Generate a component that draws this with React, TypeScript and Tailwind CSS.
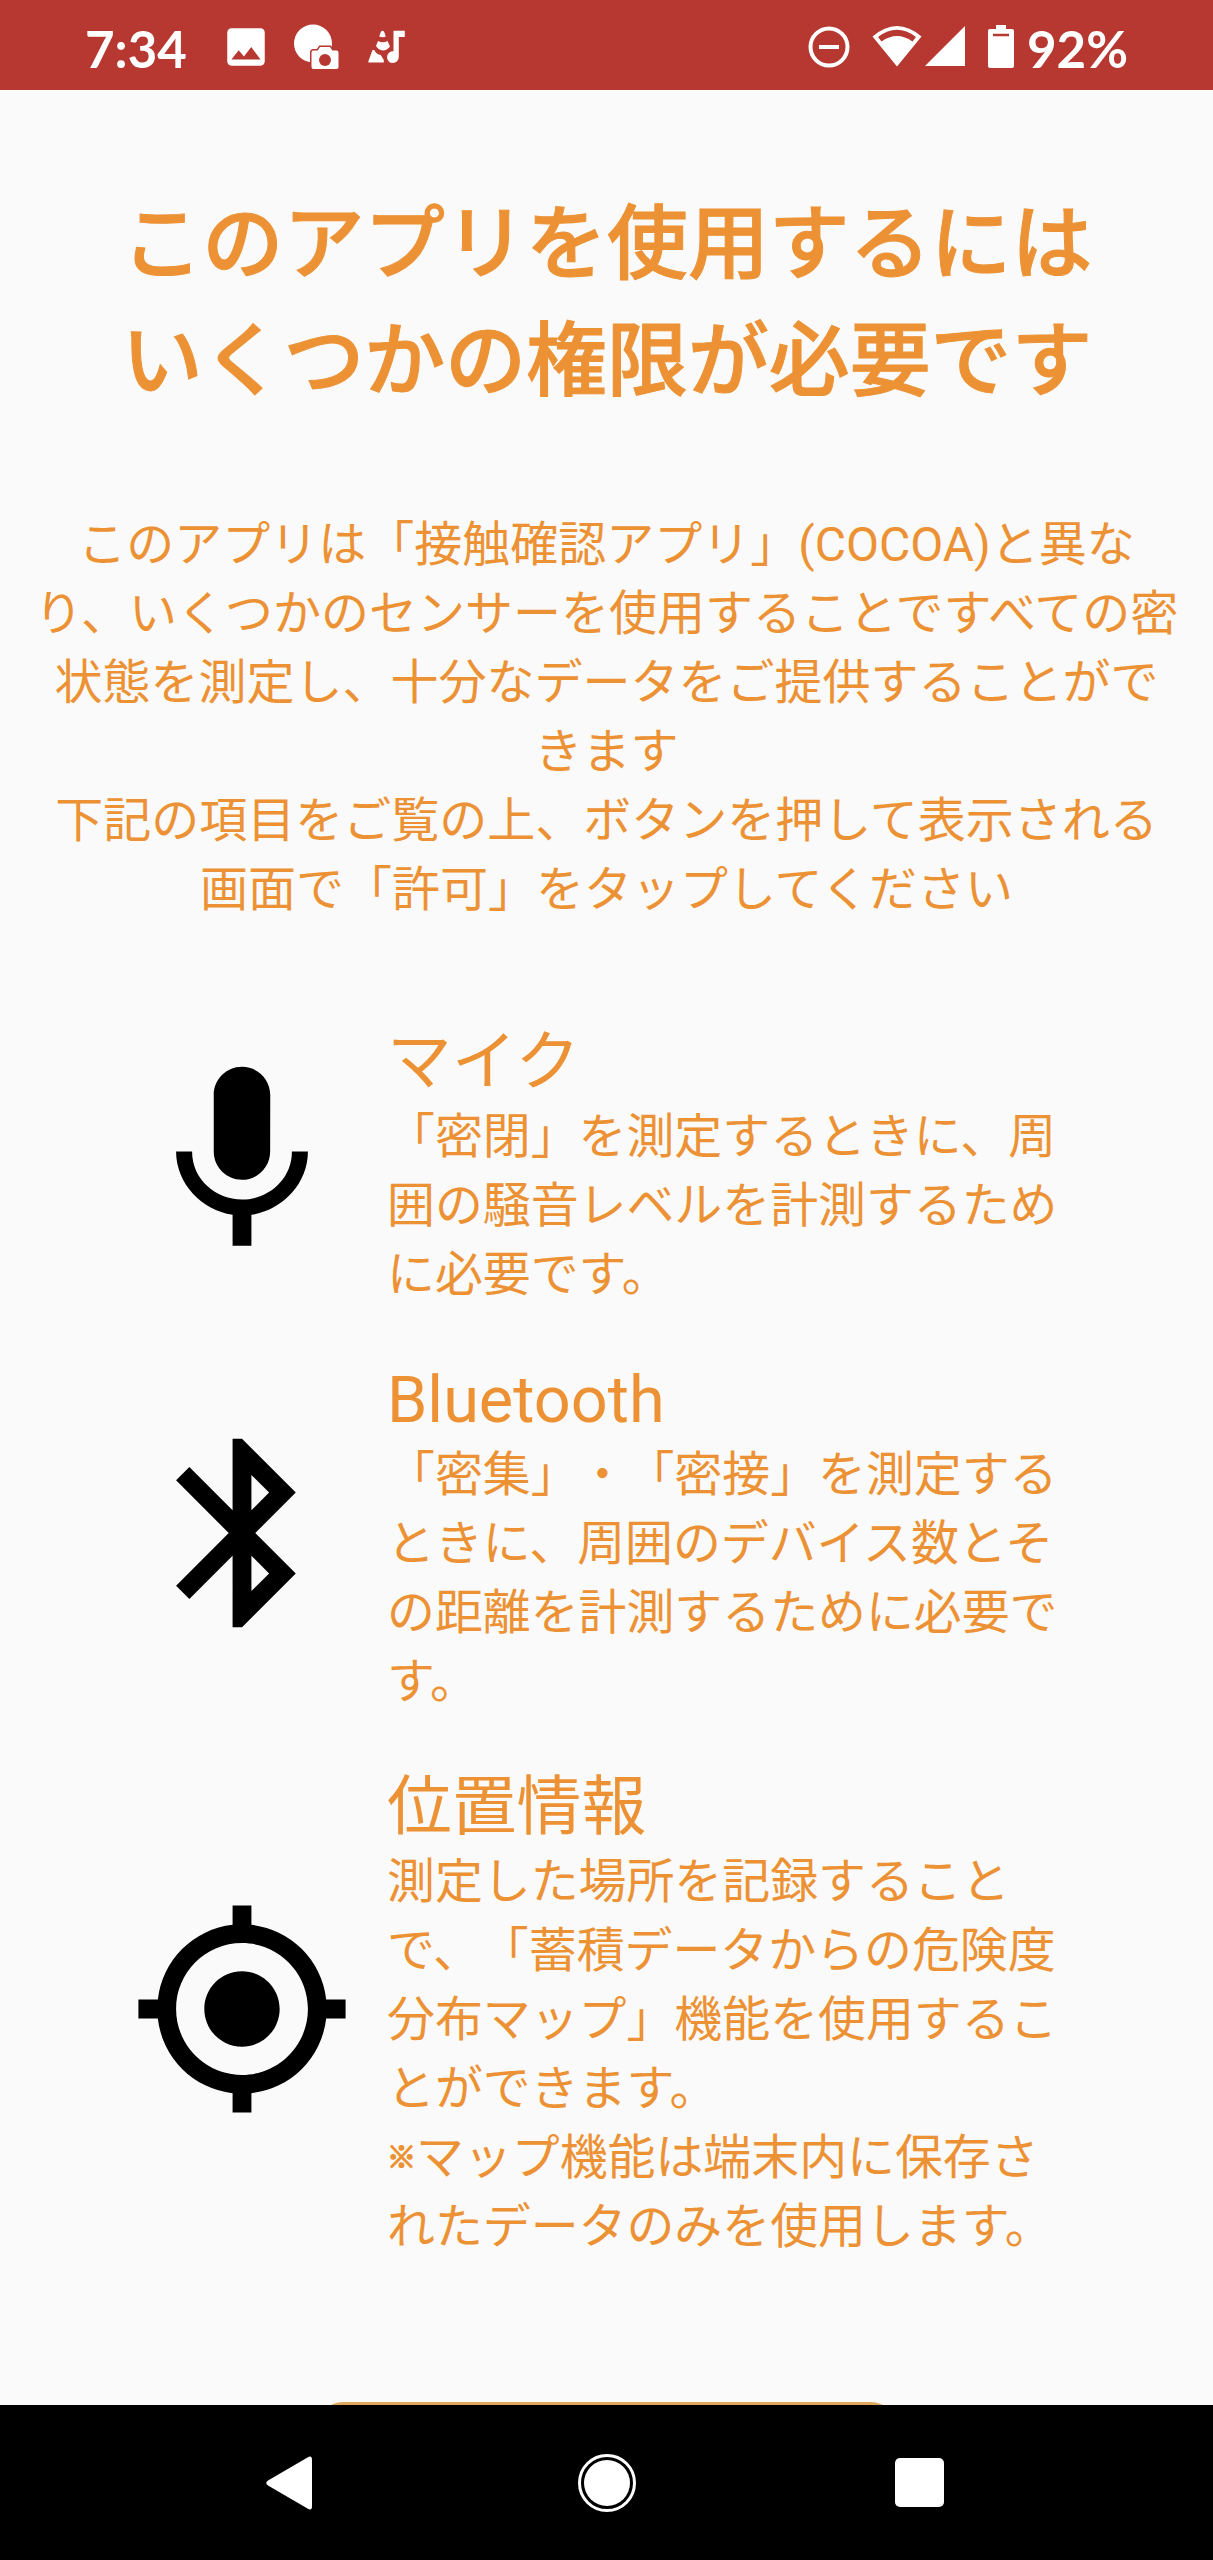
import type { ReactNode } from 'react';

type Permission = {
  title: string;
  icon: ReactNode;
  body: ReactNode;
};

const PermissionIcon = ({ d }: { d: string }) => (
  <svg viewBox="0 0 24 24" className="size-[226px] shrink-0 fill-black">
    <path d={d} />
  </svg>
);

const permissions: Permission[] = [
  {
    title: 'マイク',
    icon: (
      <PermissionIcon d="M12 14c1.66 0 2.99-1.34 2.99-3L15 5c0-1.66-1.34-3-3-3S9 3.34 9 5v6c0 1.66 1.34 3 3 3zm5.3-3c0 3-2.54 5.1-5.3 5.1S6.7 14 6.7 11H5c0 3.41 2.72 6.23 6 6.72V21h2v-3.28c3.28-.48 6-3.3 6-6.72h-1.7z" />
    ),
    body: (
      <>
        「密閉」を測定するときに、周<br />
        囲の騒音レベルを計測するため<br />
        に必要です。
      </>
    ),
  },
  {
    title: 'Bluetooth',
    icon: (
      <PermissionIcon d="M17.71 7.71L12 2h-1v7.59L6.41 5 5 6.41 10.59 12 5 17.59 6.41 19 11 14.41V22h1l5.71-5.71-4.3-4.29 4.3-4.29zM13 5.83l1.88 1.88L13 9.59V5.83zm1.88 10.46L13 18.17v-3.76l1.88 1.88z" />
    ),
    body: (
      <>
        「密集」・「密接」を測定する<br />
        ときに、周囲のデバイス数とそ<br />
        の距離を計測するために必要で<br />
        す。
      </>
    ),
  },
  {
    title: '位置情報',
    icon: (
      <PermissionIcon d="M12 8c-2.21 0-4 1.79-4 4s1.79 4 4 4 4-1.79 4-4-1.79-4-4-4zm8.94 3A8.994 8.994 0 0 0 13 3.06V1h-2v2.06A8.994 8.994 0 0 0 3.06 11H1v2h2.06A8.994 8.994 0 0 0 11 20.94V23h2v-2.06A8.994 8.994 0 0 0 20.94 13H23v-2h-2.06zM12 19c-3.87 0-7-3.13-7-7s3.13-7 7-7 7 3.13 7 7-3.13 7-7 7z" />
    ),
    body: (
      <>
        測定した場所を記録すること<br />
        で、「蓄積データからの危険度<br />
        分布マップ」機能を使用するこ<br />
        とができます。<br />
        <span className="inline-block w-[29px] align-[6px] text-[29px] font-bold leading-none [-webkit-text-stroke:1.5px]">※</span>マップ機能は端末内に保存さ<br />
        れたデータのみを使用します。
      </>
    ),
  },
];

const StatusBar = () => (
  <header className="flex h-[90px] shrink-0 items-start justify-between bg-[#b63831] pl-[85px] pr-[85px] font-['Lato',sans-serif] text-[51px] font-bold leading-[98px] text-white">
    <div className="flex">
      <span className="w-[136px]">7:34</span>
      <svg viewBox="0 0 24 24" className="mt-[22px] size-[50px] fill-white">
        <path d="M21 19V5c0-1.1-.9-2-2-2H5c-1.1 0-2 .9-2 2v14c0 1.1.9 2 2 2h14c1.1 0 2-.9 2-2zM8.5 13.5l2.5 3.01L14.5 12l4.5 6H5l3.5-4.5z" />
      </svg>
      {/* chat bubble with camera */}
      <svg viewBox="0 0 48 48" className="ml-[22px] mt-[23px] size-[48px]">
        <circle cx="20" cy="20.5" r="19" fill="white" />
        <path
          d="M20.5 27.500h4.200l2.300-3.500h10l2.300 3.500h4.200a2 2 0 0 1 2 2v14.500a2 2 0 0 1-2 2h-23a2 2 0 0 1-2-2V29.500a2 2 0 0 1 2-2z"
          fill="white"
          stroke="#b63831"
          strokeWidth="3"
          paintOrder="stroke"
        />
        <circle cx="32" cy="37" r="6" fill="#b63831" />
      </svg>
      {/* traffic cone with music note */}
      <svg viewBox="0 0 38 36" className="ml-[27px] mt-[29px] h-[36px] w-[38px] fill-white">
        <path d="M13 2.500q1.500-1.500 3 0l1.800 5q-3.300 1.500-6.600 0z" />
        <path d="M10 12q4.800 2.500 9.500 0l2.500 5.500q-3 4-7 4-4.500-.5-7-4.500z" />
        <path d="M4.500 21h1.800q2 4.500 6.500 5l3 5v2.500H1q-1 0-.7-1z" />
        <path d="M25.500 1.700h11.300v6.300h-6v20a5.900 5.900 0 1 1-5.300-5.700z" />
      </svg>
    </div>
    <div className="flex">
      <svg viewBox="0 0 42 42" className="mt-[26px] size-[42px]" fill="none" stroke="white" strokeWidth="4">
        <circle cx="21" cy="21" r="18.500" />
        <path d="M11 21h20" />
      </svg>
      <svg viewBox="0 0 50 42" className="ml-[22px] mt-[25px] h-[42px] w-[50px] fill-white">
        <path
          fillRule="evenodd"
          d="M0.500 11.500Q25-9.500 49.500 11.500L25 41.500zM6 12L9.500 16.500Q25 5.500 40.500 16.500L44 12Q25-2.500 6 12z"
        />
      </svg>
      <svg viewBox="0 0 40 40" className="ml-[3px] mt-[26px] size-[40px] fill-white">
        <path d="M0 40L40 0v40z" />
      </svg>
      <svg viewBox="0 0 26 43" className="ml-[23px] mt-[25px] h-[43px] w-[26px]">
        <path d="M8 0h10v4h6a2 2 0 0 1 2 2v35a2 2 0 0 1-2 2H2a2 2 0 0 1-2-2V6a2 2 0 0 1 2-2h6z" fill="white" />
        <path d="M5 10h16" stroke="#b63831" strokeWidth="2.500" />
      </svg>
      <span className="ml-[13px]">92%</span>
    </div>
  </header>
);

const NavigationBar = () => (
  <nav className="flex h-[155px] shrink-0 items-center justify-between bg-black pl-[266px] pr-[269px]">
    <svg viewBox="0 0 46 54" className="h-[54px] w-[46px] fill-white">
      <path d="M41.500 1.500Q46-1.500 46 4v46q0 5.500-4.500 2.500L2 29.500q-3.500-2.500 0-5z" />
    </svg>
    <svg viewBox="0 0 58 58" className="ml-[6px] size-[58px]">
      <circle cx="29" cy="29" r="27.500" fill="none" stroke="white" strokeWidth="3" />
      <circle cx="29" cy="29" r="23" fill="white" />
    </svg>
    <div className="size-[49px] rounded-[5px] bg-white" />
  </nav>
);

export default function App() {
  return (
    <div
      lang="ja"
      className="flex h-[2560px] w-[1213px] flex-col overflow-hidden bg-[#fafafa] font-['Roboto','Noto_Sans_CJK_JP',sans-serif] text-[#ec9235] [text-spacing-trim:space-all]"
    >
      <StatusBar />
      <main className="flex min-h-0 flex-1 flex-col overflow-hidden pt-[96px]">
        <h1 className="whitespace-nowrap pl-px text-center text-[80.900px] font-medium leading-[117px] [-webkit-text-stroke:1px]">
          このアプリを使用するには<br />
          いくつかの権限が必要です
        </h1>
        <p className="mt-[90px] whitespace-nowrap text-center text-[48px] leading-[69px]">
          このアプリは「接触確認アプリ」(COCOA)と異な<br />
          り、いくつかのセンサーを使用することですべての密<br />
          状態を測定し、十分なデータをご提供することがで<br />
          きます<br />
          下記の項目をご覧の上、ボタンを押して表示される<br />
          画面で「許可」をタップしてください
        </p>
        <ul className="mt-[86px] flex flex-col gap-[37px] pl-[129px]">
          {permissions.map(({ title, icon, body }) => (
            <li key={title} className="flex items-center gap-8">
              {icon}
              <div className="-mt-px mb-px whitespace-nowrap">
                <h2 className="h-[94px] text-[64.800px] leading-[106px]">{title}</h2>
                <p className="text-[47.900px] leading-[69px]">{body}</p>
              </div>
            </li>
          ))}
        </ul>
        <div className="mx-auto mt-[139px] h-[130px] w-[576px] shrink-0 rounded-[24px] bg-[#dfa75c]" />
      </main>
      <NavigationBar />
    </div>
  );
}
